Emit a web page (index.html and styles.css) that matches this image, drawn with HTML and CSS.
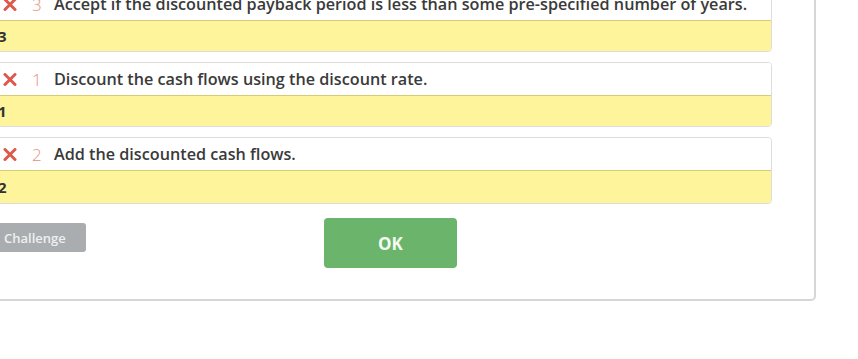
FILE: index.html
```html
<!DOCTYPE html>
<html>
<head>
<meta charset="utf-8">
<link rel="stylesheet" href="styles.css">
</head>
<body>
<div class="panel">
  <div class="card">
    <div class="prompt"><svg class="mark" viewBox="0 0 14 13" width="14" height="13"><path d="M2 1.5 L12 11.5 M12 1.5 L2 11.5" stroke="#dc5a4c" stroke-width="3" stroke-linecap="round"/></svg><span class="num">3</span><span class="text">Accept if the discounted payback period is less than some pre-specified number of years.</span></div>
    <div class="answer">3</div>
  </div>
  <div class="card">
    <div class="prompt"><svg class="mark" viewBox="0 0 14 13" width="14" height="13"><path d="M2 1.5 L12 11.5 M12 1.5 L2 11.5" stroke="#dc5a4c" stroke-width="3" stroke-linecap="round"/></svg><span class="num">1</span><span class="text">Discount the cash flows using the discount rate.</span></div>
    <div class="answer">1</div>
  </div>
  <div class="card card-last">
    <div class="prompt"><svg class="mark" viewBox="0 0 14 13" width="14" height="13"><path d="M2 1.5 L12 11.5 M12 1.5 L2 11.5" stroke="#dc5a4c" stroke-width="3" stroke-linecap="round"/></svg><span class="num">2</span><span class="text">Add the discounted cash flows.</span></div>
    <div class="answer">2</div>
  </div>
  <div class="actions">
    <button class="challenge">Challenge</button>
    <button class="ok">OK</button>
  </div>
</div>
</body>
</html>
```
FILE: styles.css
```css
html, body {
  margin: 0;
  padding: 0;
  background: #ffffff;
  overflow: hidden;
}
body {
  font-family: "Open Sans", "Liberation Sans", sans-serif;
  color: #333;
}
.panel {
  box-sizing: border-box;
  width: 846px;
  height: 341px;
  margin: -40px 0 0 -30px;
  padding: 25px 42px 0 18px;
  border: 2px solid #d6d6d6;
  border-radius: 5px;
  background: #fff;
}
.card {
  border: 1px solid #dcdcdc;
  border-radius: 4px;
  margin-bottom: 10px;
  overflow: hidden;
}
.card-last {
  margin-bottom: 0;
}
.prompt {
  height: 32px;
  display: flex;
  align-items: center;
  padding-left: 12px;
  background: #fff;
}
.mark {
  flex: none;
  display: block;
}
.num {
  margin-left: 15px;
  width: 22px;
  color: #e39080;
  font-size: 17px;
  font-weight: 300;
}
.text {
  font-size: 16.2px;
  font-weight: 600;
  color: #3a3a3a;
  white-space: nowrap;
}
.answer {
  height: 31px;
  box-sizing: border-box;
  background: #fdf49c;
  border-top: 1px solid #d8cc72;
  padding-left: 7px;
  display: flex;
  align-items: center;
  font-size: 15px;
  font-weight: 700;
  color: #333;
}
.card-last .answer {
  height: 33px;
}
.actions {
  display: flex;
  align-items: flex-start;
  margin-top: 14px;
}
.challenge {
  margin-top: 5px;
  width: 96px;
  height: 29px;
  border: none;
  border-radius: 3px;
  background: #a9adaf;
  color: #eef0f0;
  font-family: "Open Sans", "Liberation Sans", sans-serif;
  font-size: 13px;
  font-weight: 600;
  text-align: left;
  padding-left: 14px;
}
.ok {
  margin-left: 238px;
  width: 133px;
  height: 50px;
  border: none;
  border-radius: 4px;
  background: #6bb46c;
  color: #f4fbf2;
  font-family: "Open Sans", "Liberation Sans", sans-serif;
  font-size: 17px;
  font-weight: 700;
}
```
